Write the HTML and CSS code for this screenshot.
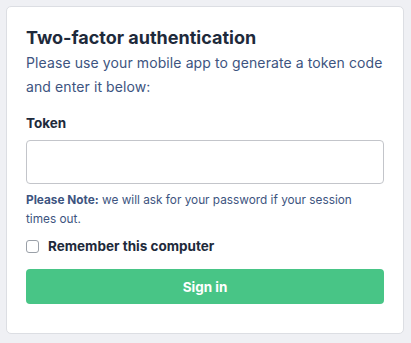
FILE: index.html
```html
<!DOCTYPE html>
<html>
<head>
<meta charset="utf-8">
<link rel="stylesheet" href="styles.css">
</head>
<body>
<div class="card">
  <h1 class="title">Two-factor authentication</h1>
  <p class="intro">Please use your mobile app to generate a token code and enter it below:</p>
  <label class="label" for="token">Token</label>
  <input class="input" id="token" type="text">
  <p class="note"><strong>Please Note:</strong> we will ask for your password if your session times out.</p>
  <label class="remember"><span class="box"></span>Remember this computer</label>
  <button class="btn">Sign in</button>
</div>
</body>
</html>
```
FILE: styles.css
```css
html, body { margin: 0; padding: 0; }
body {
  background: #eff0f4;
  padding: 6px 7px 8px 6px;
  font-family: Inter, "Noto Sans", sans-serif;
  -webkit-font-smoothing: antialiased;
}
.card {
  background: #fff;
  border: 1px solid #dcdee3;
  border-radius: 5px;
  padding: 17px 19px 29px 19px;
  display: flex;
  flex-direction: column;
}
.card > * { flex-shrink: 0; }
.title {
  margin: 0;
  font-size: 18px;
  line-height: 27px;
  font-weight: 700;
  color: #1e2a3b;
}
.intro {
  margin: 0;
  font-size: 14px;
  letter-spacing: 0.1px;
  line-height: 24px;
  color: #3d5480;
}
.label {
  margin-top: 15px;
  font-size: 13.5px;
  line-height: 18px;
  font-weight: 700;
  color: #1e2a3b;
}
.input {
  margin-top: 8px;
  height: 44px;
  box-sizing: border-box;
  border: 1px solid #c3c5ca;
  border-radius: 4px;
  outline: none;
}
.note {
  margin: 7px 0 0;
  max-width: 335px;
  font-size: 11.8px;
  line-height: 19px;
  color: #3d5480;
}
.note strong { font-weight: 700; }
.remember {
  margin-top: 8px;
  display: flex;
  align-items: center;
  gap: 9px;
  font-size: 13.5px;
  line-height: 18px;
  font-weight: 700;
  color: #1e2a3b;
}
.box {
  width: 11px;
  height: 11px;
  border: 1px solid #9aa0a8;
  border-radius: 3px;
}
.btn {
  margin-top: 14px;
  height: 35px;
  border: none;
  border-radius: 4px;
  background: #48c586;
  color: #fff;
  font-family: inherit;
  font-size: 13.5px;
  font-weight: 700;
}
```
